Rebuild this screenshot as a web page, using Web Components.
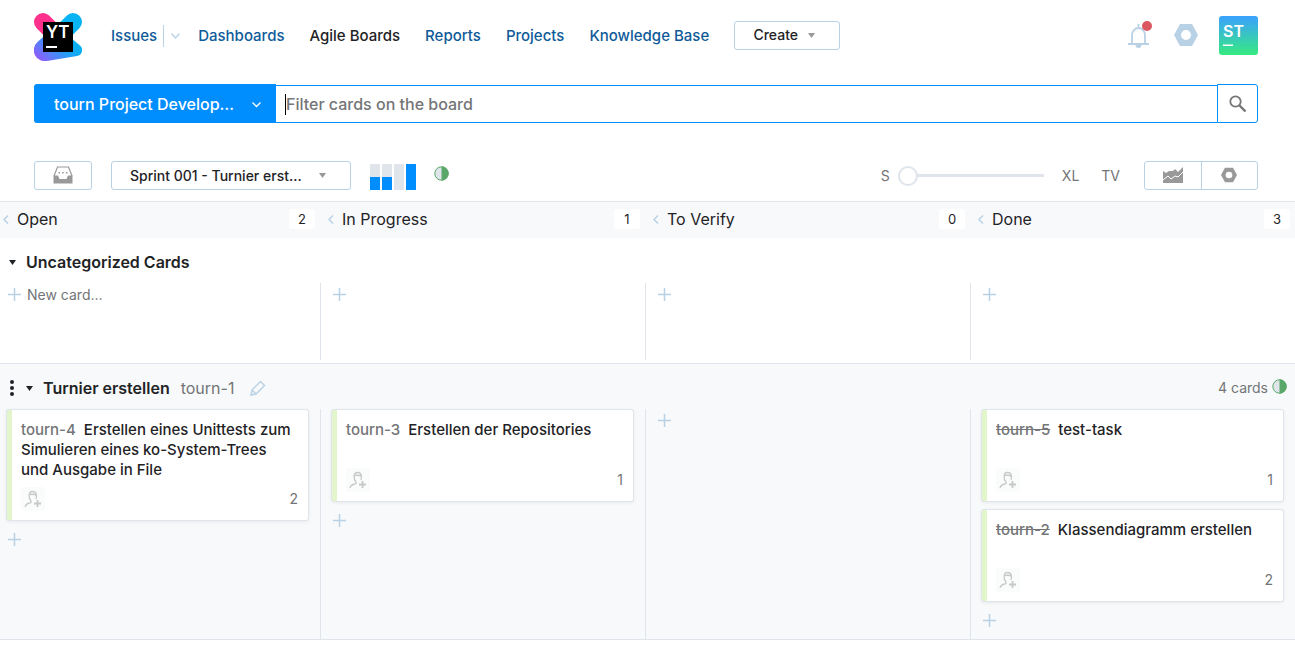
<!DOCTYPE html>
<html lang="en">
<head>
<meta charset="utf-8">
<title>Agile Board</title>
<style>
  html, body { margin: 0; }
  body {
    font-family: Inter, "Noto Sans", sans-serif;
    font-size: 15px;
    line-height: 20px;
    color: #1f2326;
    background: #fff;
    --link: #0f5b99;
    --blue: #008eff;
    --line: #dfe5eb;
    --control: #b8d1e5;
    --muted: #737577;
    --panel: #f7f9fa;
  }
</style>
</head>
<body>
<yt-header></yt-header>
<yt-search></yt-search>
<yt-toolbar></yt-toolbar>
<main>
  <yt-board-head>
    <yt-column-head count="2">Open</yt-column-head>
    <yt-column-head count="1">In Progress</yt-column-head>
    <yt-column-head count="0">To Verify</yt-column-head>
    <yt-column-head count="3">Done</yt-column-head>
  </yt-board-head>
  <yt-swimlane heading="Uncategorized Cards">
    <yt-cell><yt-add label="New card…"></yt-add></yt-cell>
    <yt-cell><yt-add></yt-add></yt-cell>
    <yt-cell><yt-add></yt-add></yt-cell>
    <yt-cell><yt-add></yt-add></yt-cell>
  </yt-swimlane>
  <yt-swimlane heading="Turnier erstellen" issue="tourn-1" summary="4 cards">
    <yt-cell>
      <yt-card issue="tourn-4" points="2">Erstellen eines Unittests zum Simulieren eines ko-System-Trees und Ausgabe in File</yt-card>
      <yt-add></yt-add>
    </yt-cell>
    <yt-cell>
      <yt-card issue="tourn-3" points="1">Erstellen der Repositories</yt-card>
      <yt-add></yt-add>
    </yt-cell>
    <yt-cell><yt-add></yt-add></yt-cell>
    <yt-cell>
      <yt-card issue="tourn-5" points="1" resolved>test-task</yt-card>
      <yt-card issue="tourn-2" points="2" resolved>Klassendiagramm erstellen</yt-card>
      <yt-add></yt-add>
    </yt-cell>
  </yt-swimlane>
</main>

<script>
const RESET = `
  :host, *, *::before { box-sizing: border-box; }
  a { color: inherit; text-decoration: none; }
  button, select, input { font: inherit; color: inherit; margin: 0; padding: 0; border: 0; background: none; border-radius: 0; }
  button, select { cursor: pointer; }
  button { display: flex; align-items: center; justify-content: center; }
  svg { display: block; flex: none; }
`;

const define = (name, render) => customElements.define(name, class extends HTMLElement {
  connectedCallback() {
    if (this.shadowRoot) return;
    this.attachShadow({ mode: 'open' }).innerHTML = render(this);
  }
});

const GEAR = '<path fill-rule="evenodd" d="M6 1h12l6 11-6 11H6L0 12zM12 7a5 5 0 1 0 0 10 5 5 0 0 0 0-10z" fill="currentColor"/>';

define('yt-progress', () => `
  <style>:host { display: block; } svg { display: block; }</style>
  <svg width="15" height="15" viewBox="0 0 15 15" aria-hidden="true">
    <circle cx="7.500" cy="7.500" r="6.700" fill="#dfe5eb" stroke="#59a869" stroke-width="1"/>
    <path d="M7.500.300a7.200 7.200 0 0 1 0 14.400z" fill="#59a869"/>
  </svg>`);

define('yt-header', () => `
  <style>${RESET}
    :host { display: flex; align-items: center; height: 70px; padding: 0 37px 0 34px; }
    .logo { margin: 4px 29px 0 0; }
    nav { display: flex; align-items: center; gap: 25px; padding-top: 2px; font-size: 15px; font-weight: 500; color: var(--link); }
    .issues { display: flex; align-items: center; margin-right: -8px; }
    .issues button { width: 18px; height: 22px; margin-left: 6px; border-left: 1px solid var(--control); padding-left: 6px; justify-content: flex-start; }
    .current { color: #1f2326; }
    .create { width: 106px; height: 29px; margin-left: 25px; border: 1px solid var(--control); border-radius: 3px; gap: 10px; padding-right: 6px; font-size: 14px; font-weight: 500; }
    .tools { display: flex; align-items: center; margin-left: auto; gap: 21px; color: var(--control); }
  </style>
  <a class="logo" href="#" aria-label="YouTrack">
    <svg width="48" height="48" viewBox="0 0 48 48">
      <defs>
        <linearGradient id="tail" x1="0" y1="1" x2="1" y2=".5"><stop offset=".1" stop-color="#905cfb"/><stop offset=".7" stop-color="#1fa2f5"/><stop offset="1" stop-color="#07b3f2"/></linearGradient>
      </defs>
      <path d="M9 9l15 15" stroke="#ff318c" stroke-width="18" stroke-linecap="round"/>
      <path d="M39 9 24 24" stroke="#07b3f2" stroke-width="18" stroke-linecap="round"/>
      <path d="M3.500 29 9 24h27l10 8.500A6 6 0 0 1 43 43L13 48A11 11 0 0 1 3.500 29z" fill="url(#tail)"/>
      <path d="M9 9h30v30H9z" fill="#000"/>
      <path d="M12 33h11v2H12z" fill="#fff"/>
      <text x="12" y="25" font-family="Inter, sans-serif" font-size="17" font-weight="600" fill="#fff">YT</text>
    </svg>
  </a>
  <nav>
    <span class="issues"><a href="#">Issues</a>
      <button aria-label="Saved searches"><svg width="11" height="6" viewBox="0 0 11 6" fill="none" stroke="#b8d1e5" stroke-width="1.300"><path d="M1.500 .5l4 4.500 4-4.500"/></svg></button>
    </span>
    <a href="#">Dashboards</a>
    <a href="#" class="current">Agile Boards</a>
    <a href="#">Reports</a>
    <a href="#">Projects</a>
    <a href="#">Knowledge Base</a>
  </nav>
  <button class="create">Create <svg width="7" height="5" viewBox="0 0 7 5"><path d="M0 0h7L3.500 5z" fill="#999"/></svg></button>
  <div class="tools">
    <button aria-label="Notifications">
      <svg width="26" height="28" viewBox="0 0 26 28">
        <path d="M5 22v-8a6.500 7 0 0 1 13 0v8M11.500 7V3" fill="none" stroke="currentColor" stroke-width="1.800"/>
        <path d="M1 22h21v2H1zM8.500 24h6a3 3 0 0 1-6 0z" fill="currentColor"/>
        <circle cx="20" cy="5" r="5" fill="#db5860"/>
      </svg>
    </button>
    <button aria-label="Administration"><svg width="24" height="24" viewBox="0 0 24 24">${GEAR}</svg></button>
    <button aria-label="Profile">
      <svg width="39" height="39" viewBox="0 0 39 39">
        <defs><linearGradient id="avatar" x1="0" y1="0" x2="0" y2="1"><stop offset="0" stop-color="#3ba1ff"/><stop offset="1" stop-color="#36ea7f"/></linearGradient></defs>
        <rect width="39" height="39" rx="3" fill="url(#avatar)"/>
        <text x="4" y="21" font-family="Inter, sans-serif" font-size="16" font-weight="600" fill="#fff">ST</text>
        <path d="M4 28.500h10v1.500H4z" fill="#fff"/>
      </svg>
    </button>
  </div>`);

define('yt-search', () => `
  <style>${RESET}
    :host { display: flex; height: 39px; margin: 14px 37px 0 34px; font-size: 16px; font-weight: 500; }
    .project { position: relative; flex: none; width: 242px; display: flex; background: var(--blue); border-radius: 3px 0 0 3px; color: #fff; }
    select { appearance: none; width: 100%; padding: 0 40px 0 20px; }
    .project svg { position: absolute; right: 15px; top: 18px; pointer-events: none; }
    .query { flex: 1; min-width: 0; display: flex; align-items: center; margin-top: 1px; padding-left: 9px; border: 1px solid var(--blue); border-width: 1px 0; }
    .caret { width: 1px; height: 21px; background: #000; }
    input { flex: 1; min-width: 0; height: 30px; outline: 0; }
    input::placeholder { color: #737577; opacity: 1; }
    .go { width: 41px; border: 1px solid var(--blue); border-radius: 0 3px 3px 0; }
  </style>
  <span class="project">
    <select aria-label="Board"><option>tourn Project Develop…</option></select>
    <svg width="9" height="6" viewBox="0 0 9 6" fill="none" stroke="#fff" stroke-width="1.300"><path d="M.5.500l4 4 4-4"/></svg>
  </span>
  <span class="query"><span class="caret"></span><input type="text" aria-label="Filter cards" placeholder="Filter cards on the board"></span>
  <button class="go" aria-label="Search"><svg width="18" height="18" viewBox="0 0 18 18" fill="none" stroke="#737577"><circle cx="6.500" cy="6.500" r="5.200" stroke-width="1.800"/><path d="M10.500 10.500l6 6" stroke-width="2.400"/></svg></button>`);

define('yt-toolbar', () => `
  <style>${RESET}
    :host { display: flex; align-items: center; height: 29px; margin: 38px 37px 0 34px; color: var(--muted); font-size: 14px; }
    .box { height: 29px; border: 1px solid var(--control); border-radius: 3px; }
    .backlog { width: 58px; padding-bottom: 2px; }
    .sprint { position: relative; display: flex; width: 240px; margin: 0 19px; color: #1f2326; font-weight: 500; }
    select { appearance: none; width: 100%; padding-left: 18px; }
    .sprint svg { position: absolute; right: 24px; top: 11px; pointer-events: none; }
    .chart { margin-top: 2px; }
    yt-progress { margin: 0 0 4px 18px; }
    .size { display: flex; align-items: center; gap: 8px; margin-left: auto; }
    input { appearance: none; width: 146px; height: 20px; margin-right: 10px; background: linear-gradient(var(--line), var(--line)) center / 100% 3px no-repeat; }
    input::-webkit-slider-thumb { appearance: none; width: 20px; height: 20px; border: 2px solid var(--line); border-radius: 50%; background: #fff; }
    .tv { margin: 0 24px 0 22px; }
    .pair { display: flex; width: 114px; color: #999; }
    .pair button { flex: 1; padding-bottom: 2px; }
    .pair button + button { border-left: 1px solid var(--control); }
  </style>
  <button class="box backlog" aria-label="Backlog"><svg width="20" height="18" viewBox="0 0 20 18"><path d="M1 10 4.500 1h11L19 10" fill="none" stroke="#999" stroke-width="1.200"/><path d="M.5 9.500H5l1.500 3.500h7L15 9.500h4.500v8H.5z" fill="#999"/><path d="M5.500 6H7v1.500H5.500zM9.200 6h1.500v1.500H9.200zM13 6h1.500v1.500H13z" fill="#999"/></svg></button>
  <span class="box sprint"><select aria-label="Sprint"><option>Sprint 001 - Turnier erst…</option></select><svg width="7" height="5" viewBox="0 0 7 5"><path d="M0 0h7L3.500 5z" fill="#999"/></svg></span>
  <svg class="chart" width="46" height="26" viewBox="0 0 46 26"><path d="M0 0h10v13H0zM12 0h10v13H12zM24 0h10v26H24z" fill="#dfe5eb"/><path d="M0 13h10v13H0zM12 13h10v13H12zM36 0h10v26H36z" fill="#008eff"/></svg>
  <yt-progress></yt-progress>
  <div class="size"><span>S</span><input type="range" min="0" max="3" value="0" aria-label="Card size"><span>XL</span></div>
  <span class="tv">TV</span>
  <div class="box pair">
    <button aria-label="Chart"><svg width="20" height="16" viewBox="0 0 20 16"><path d="M0 4l3 2 3-2 4 0 2-2 3 3 5-5v16H0z" fill="currentColor"/><path d="M0 13l5-4 3 3 4-3 3 1 5-5" fill="none" stroke="#fff" stroke-width="1"/></svg></button>
    <button aria-label="Board settings"><svg width="16" height="16" viewBox="0 0 24 24">${GEAR}</svg></button>
  </div>`);

define('yt-board-head', () => `
  <style>${RESET}
    :host { display: block; overflow: hidden; margin-top: 11px; border-top: 1px solid var(--line); background: var(--panel); }
    .row { display: grid; grid-template-columns: repeat(4, minmax(0, 1fr)); margin-left: -5px; }
  </style>
  <div class="row"><slot></slot></div>`);

define('yt-column-head', el => `
  <style>${RESET}
    :host { display: flex; align-items: center; height: 36px; padding: 0 5px 2px 8px; font-size: 16px; }
    button { width: 7px; height: 20px; margin-right: 7px; justify-content: flex-start; }
    .count { width: 26px; height: 20px; margin-left: auto; border-radius: 3px; background: #fff; font-size: 13px; text-align: center; }
  </style>
  <button aria-label="Collapse column"><svg width="6" height="9" viewBox="0 0 6 9" fill="none" stroke="#b8d1e5" stroke-width="1.400"><path d="M5 .5l-4 4 4 4"/></svg></button>
  <slot></slot><span class="count">${el.getAttribute('count')}</span>`);

define('yt-swimlane', el => {
  const issue = el.getAttribute('issue');
  return `
  <style>${RESET}
    :host { display: block; overflow: hidden; border-bottom: 1px solid var(--line); }
    :host([issue]) { background: var(--panel); }
    header { display: flex; align-items: center; padding: 14px 8px 11px 8px; }
    .grip { width: 7px; margin-right: 10px; }
    .toggle { width: 8px; height: 20px; margin-right: 10px; }
    h2 { margin: 0; font-size: 16px; line-height: 20px; font-weight: 600; }
    .id { margin: 0 16px 0 11px; font-size: 16px; color: var(--muted); }
    .sum { margin: 0 4px 0 auto; font-size: 14px; color: var(--muted); }
    yt-progress { margin-bottom: 4px; }
    .cells { display: grid; grid-template-columns: repeat(4, minmax(0, 1fr)); margin-left: -5px; }
    :host(:not([issue])) .cells { min-height: 77px; margin-bottom: 3px; }
  </style>
  <header>
    ${issue ? '<button class="grip" aria-label="Move swimlane"><svg width="4" height="16" viewBox="0 0 4 16" fill="#1f2326"><circle cx="2" cy="2" r="2"/><circle cx="2" cy="8" r="2"/><circle cx="2" cy="14" r="2"/></svg></button>' : ''}
    <button class="toggle" aria-label="Toggle swimlane"><svg width="7" height="5" viewBox="0 0 7 5"><path d="M0 0h7L3.500 5z" fill="#1f2326"/></svg></button>
    <h2>${el.getAttribute('heading')}</h2>
    ${issue ? `<a class="id" href="#">${issue}</a>
    <button aria-label="Edit"><svg width="16" height="16" viewBox="0 0 16 16" fill="none" stroke="#b8d1e5" stroke-width="1.400"><path d="M1 15l1-5 8.500-8.500 4 4L6 14zM2 10l4 4"/></svg></button>
    <span class="sum">${el.getAttribute('summary')}</span><yt-progress></yt-progress>` : ''}
  </header>
  <div class="cells"><slot></slot></div>`;
});

define('yt-cell', () => `
  <style>${RESET}
    :host { display: flex; flex-direction: column; gap: 9px; padding: 1px 12px 8px 11px; border-left: 1px solid var(--line); }
  </style>
  <slot></slot>`);

define('yt-add', el => `
  <style>${RESET}
    :host { display: flex; height: 21px; padding-top: 1px; font-size: 14px; color: var(--muted); }
    button { gap: 6px; padding-left: 1px; }
    svg { margin-bottom: 2px; }
  </style>
  <button aria-label="${el.getAttribute('label') || 'New card'}"><svg width="13" height="13" viewBox="0 0 13 13" fill="none" stroke="#b8d1e5" stroke-width="1.500"><path d="M6.500 0v13M0 6.500h13"/></svg>${el.getAttribute('label') || ''}</button>`);

define('yt-card', el => `
  <style>${RESET}
    :host { display: flex; flex-direction: column; min-height: 91px; padding: 10px 10px 9px; border-left: 5px solid #e3f5cb; border-radius: 2px; background: #fff; box-shadow: 0 0 0 1px var(--line), 0 1px 4px #0000001a; }
    p { margin: 0 0 7px -1px; padding-right: 2px; font-size: 15px; line-height: 20px; font-weight: 500; }
    a { margin-right: 8px; color: var(--muted); }
    :host([resolved]) a { text-decoration: line-through; }
    footer { display: flex; align-items: center; justify-content: space-between; margin-top: auto; margin-left: -1px; font-size: 14px; color: var(--muted); }
    button { width: 24px; height: 24px; border-radius: 3px; background: #fafbfb; }
  </style>
  <p><a href="#">${el.getAttribute('issue')}</a><slot></slot></p>
  <footer>
    <button aria-label="Assign"><svg width="18" height="18" viewBox="0 0 18 18" fill="none" stroke="#c6c8c9" stroke-width="1.300"><path d="M1 17c.5-3 2.500-3.500 6-4.500v-1.500C4.500 8.500 4 1.500 8.500 1.500S13 6 12 9"/><path d="M5.500 4.500c3-.5 5-.5 7 .5" stroke-width="1.600"/><path d="M13.500 10v7M10 13.500h7" stroke-width="1.800"/></svg></button>
    <span>${el.getAttribute('points')}</span>
  </footer>`);
</script>
</body>
</html>
